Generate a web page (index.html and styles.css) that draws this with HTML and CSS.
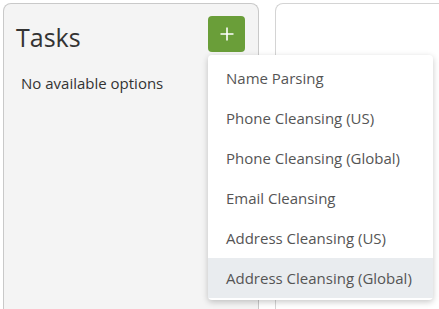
FILE: index.html
```html
<!DOCTYPE html>
<html>
<head>
<meta charset="utf-8">
<link rel="stylesheet" href="styles.css">
</head>
<body>
<div class="layout">
  <section class="panel tasks">
    <div class="panel-head">
      <h1 class="title">Tasks</h1>
      <button class="add-btn" aria-label="Add">
        <svg width="14" height="14" viewBox="0 0 14 14"><path d="M7 0.5V13.5M0.5 7H13.5" stroke="#fff" stroke-width="1.6" fill="none"/></svg>
      </button>
    </div>
    <p class="empty">No available options</p>
  </section>
  <section class="panel detail"></section>
</div>
<ul class="menu">
  <li class="menu-item">Name Parsing</li>
  <li class="menu-item">Phone Cleansing (US)</li>
  <li class="menu-item">Phone Cleansing (Global)</li>
  <li class="menu-item">Email Cleansing</li>
  <li class="menu-item">Address Cleansing (US)</li>
  <li class="menu-item active">Address Cleansing (Global)</li>
</ul>
</body>
</html>
```
FILE: styles.css
```css
html, body {
  margin: 0;
  padding: 0;
  background: #fff;
  overflow: hidden;
  height: 309px;
  font-family: "Open Sans", "Noto Sans", sans-serif;
  color: #333;
}
.layout {
  display: flex;
  gap: 16px;
  padding: 3px 0 0 3px;
  height: 309px;
  box-sizing: border-box;
}
.panel {
  box-sizing: border-box;
  height: 100%;
}
.tasks {
  width: 256px;
  flex: none;
  background: #f4f4f4;
  border: 1px solid #c9c9c9;
  border-bottom: none;
  border-radius: 8px 8px 0 0;
  padding: 12px 13px 0 12px;
}
.detail {
  flex: 1;
  background: #fff;
  border: 1px solid #d4d4d4;
  border-right: none;
  border-bottom: none;
  border-radius: 8px 0 0 0;
}
.panel-head {
  display: flex;
  justify-content: space-between;
  align-items: flex-start;
}
.title {
  margin: 6px 0 0 0;
  font-size: 25px;
  font-weight: 400;
  line-height: 30px;
  color: #333;
}
.add-btn {
  width: 37px;
  height: 36px;
  border: none;
  border-radius: 4px;
  background: #6a9e39;
  display: flex;
  align-items: center;
  justify-content: center;
  padding: 0;
}
.empty {
  margin: 21px 0 0 5px;
  font-size: 15px;
  line-height: 20px;
  color: #333;
}
.menu {
  position: absolute;
  top: 55px;
  left: 208px;
  width: 225px;
  margin: 0;
  padding: 3px 0 2px;
  list-style: none;
  background: #fff;
  border-radius: 4px;
  box-shadow: 0 2px 6px rgba(0,0,0,0.22);
}
.menu-item {
  height: 40px;
  line-height: 40px;
  padding-left: 18px;
  font-size: 15px;
  color: #555;
}
.menu-item.active {
  background: #e9ecef;
}
```
